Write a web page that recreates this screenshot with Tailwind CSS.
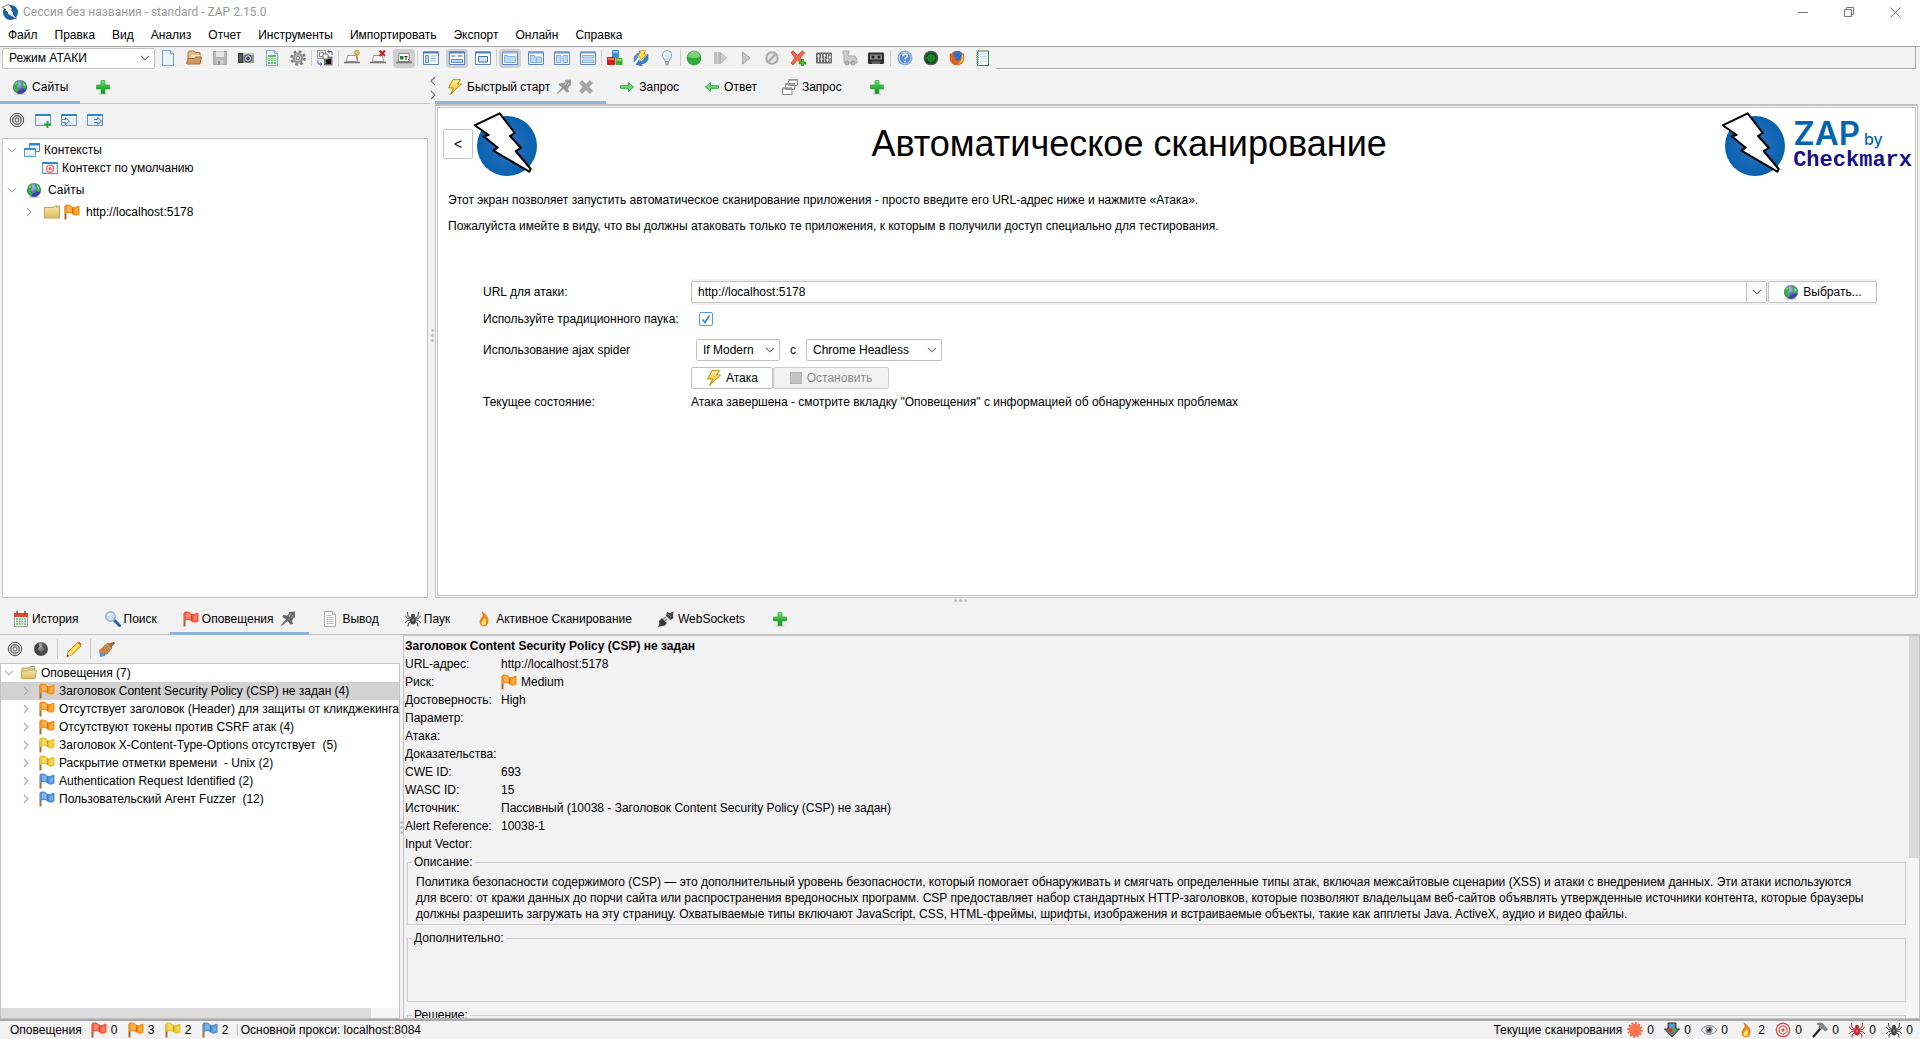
<!DOCTYPE html>
<html lang="ru">
<head>
<meta charset="utf-8">
<title>Сессия без названия - standard - ZAP 2.15.0</title>
<script src="https://cdn.jsdelivr.net/npm/@tailwindcss/browser@4"></script>
</head>
<body class="flex h-screen flex-col overflow-hidden bg-[#f2f2f2] font-['Liberation_Sans',Arial,sans-serif] text-xs leading-[18px] text-black">

<svg width="0" height="0" class="absolute" aria-hidden="true">
  <defs>
    <radialGradient id="gBlue"><stop offset="0" stop-color="#2f70c4"/><stop offset="1" stop-color="#0862ae"/></radialGradient>
    <linearGradient id="gBolt" x2="0" y2="1"><stop offset="0" stop-color="#fff3a0"/><stop offset="1" stop-color="#eea800"/></linearGradient>
    <linearGradient id="gGreen" x2="0" y2="1"><stop offset="0" stop-color="#7ee37a"/><stop offset=".5" stop-color="#35b53a"/><stop offset="1" stop-color="#129222"/></linearGradient>
    <linearGradient id="gFolder" x2="0" y2="1"><stop offset="0" stop-color="#fbe7a8"/><stop offset="1" stop-color="#e0bb62"/></linearGradient>
    <linearGradient id="gWin" x2="0" y2="1"><stop offset="0" stop-color="#ffffff"/><stop offset="1" stop-color="#dbe8f6"/></linearGradient>
    <radialGradient id="gGlobe" cx=".4" cy=".3"><stop offset="0" stop-color="#c0c6ff"/><stop offset="1" stop-color="#3c40a8"/></radialGradient>
    <radialGradient id="gGray" cx=".4" cy=".3"><stop offset="0" stop-color="#b5b5b5"/><stop offset="1" stop-color="#4a4a4a"/></radialGradient>

    <symbol id="zap" viewBox="0 0 64 64"><circle cx="34" cy="34" r="30" fill="url(#gBlue)"/><path d="M1.7 13.3 26.7 1.3 41.7 21 37 24 48 36 42.7 39 57.7 57 56.3 59.7 20.3 38.7 24.7 35.7 10.7 24.3 15.7 23Z" fill="#fff" stroke="#000" stroke-width="2" stroke-linejoin="round"/></symbol>
    <symbol id="globe" viewBox="0 0 16 16"><ellipse cx="8" cy="15" rx="6" ry="1" fill="#ccc"/><circle cx="8" cy="8" r="7" fill="url(#gGlobe)"/><path d="M2 5C3 3 4 2 6 1.500L5.500 4 7 5.500 5 7 5 9 7 10 6.500 12 5 14C2 12 1 9 2 5ZM10 1.500C13 3 15 6 14.800 9L12 10 10 8 11 6 9 4Z" fill="#2fb33c"/><path d="M3 5 5 3 4.500 6ZM11 3 13.500 6 12 8Z" fill="#8cef84"/></symbol>
    <symbol id="globeGray" viewBox="0 0 16 16"><circle cx="8" cy="8" r="7" fill="url(#gGray)"/><path d="M2 5C3 3 4 2 6 1.500L5.500 4 7 5.500 5 7 5 9 7 10 6.500 12 5 14C2 12 1 9 2 5Z" fill="#444"/><path d="M10 2 14 6 12 9 9 5Z" fill="#555"/></symbol>
    <symbol id="plus" viewBox="0 0 16 16"><ellipse cx="8" cy="15" rx="5" ry=".8" fill="#ccc"/><path d="M6 1.500h4V6h4.500v4H10v4.500H6V10H1.500V6H6Z" fill="url(#gGreen)" stroke="#1c9a2a" stroke-width=".6"/></symbol>
    <symbol id="bolt" viewBox="0 0 16 16"><path d="M6 .6 13.500.6 10.500 5 14.500 5 3.500 15.500 6.500 9 1.600 9Z" fill="url(#gBolt)" stroke="#b8860b" stroke-width=".9" stroke-linejoin="round"/></symbol>
    <symbol id="target" viewBox="0 0 16 16"><circle cx="8" cy="8" r="6.700" fill="#d8d8d8" stroke="#555" stroke-width="1"/><circle cx="8" cy="8" r="4.300" fill="none" stroke="#777" stroke-width="1.400"/><circle cx="8" cy="8" r="1.800" fill="#eee" stroke="#777" stroke-width="1.200"/></symbol>
    <symbol id="targetRed" viewBox="0 0 16 16"><circle cx="8" cy="8" r="6.700" fill="#fff" stroke="#d9534f" stroke-width="1.400"/><circle cx="8" cy="8" r="4" fill="none" stroke="#e36464" stroke-width="1.500"/><circle cx="8" cy="8" r="1.700" fill="#d9534f"/></symbol>
    <symbol id="win" viewBox="0 0 16 16"><path d="M.5 2.500h15v11H.5Z" fill="url(#gWin)" stroke="#5a96cc"/><path d="M.5 2h15v2H.5Z" fill="#2e86d0"/></symbol>
    <symbol id="winAdd" viewBox="0 0 16 16"><use href="#win"/><path d="M11.500 9h2v2.500H16v2h-2.500V16h-2v-2.500H9v-2h2.500Z" fill="#25a833"/></symbol>
    <symbol id="winIn" viewBox="0 0 16 16"><use href="#win"/><path d="M1 7.500h3.500V5.500L8.500 9 4.500 12.500v-2H1" fill="#e6f2ff" stroke="#3b7fc0" stroke-width="1"/></symbol>
    <symbol id="winOut" viewBox="0 0 16 16"><use href="#win"/><path d="M7 7.500h3.500V5.500L14.500 9l-4 3.500v-2H7" fill="#e6f2ff" stroke="#3b7fc0" stroke-width="1"/></symbol>
    <symbol id="contexts" viewBox="0 0 16 16"><path d="M5.500 1.500h10v8h-10Z" fill="url(#gWin)" stroke="#4c8fd0"/><path d="M5 1h11v2.500H5Z" fill="#2e86d0"/><path d="M.5 6.500h11v8H.5Z" fill="url(#gWin)" stroke="#5a96cc"/><path d="M.5 6h11v2H.5Z" fill="#3b8fd6"/></symbol>
    <symbol id="context" viewBox="0 0 16 16"><use href="#win"/><circle cx="8" cy="8.700" r="3.500" fill="#ffe3e0" stroke="#ee6b6b" stroke-width="1.200"/><circle cx="8" cy="8.700" r="1.400" fill="#ee5b5b"/></symbol>
    <symbol id="folder" viewBox="0 0 16 16"><path d="M.5 3.500h9l1-1.500h5v12H.5Z" fill="url(#gFolder)" stroke="#c9a14d"/><path d="M12 3h2.500" stroke="#6fb7c9"/></symbol>
    <symbol id="folderOpen" viewBox="0 0 16 16"><path d="M1 13.500V3h7l1-1.500h4.500V13Z" fill="#f6dc92" stroke="#b99a4e"/><path d="M8 2.500h5v3H8Z" fill="#a5d3e6"/><path d="M.5 13.500V6h5l1-1h9l-1.500 8.500Z" fill="url(#gFolder)" stroke="#c9a14d"/></symbol>
    <symbol id="flag" viewBox="0 0 16 16"><path d="M1.500 2v13.500" stroke="#a06a35" stroke-width="2"/><path d="M1 1C4 .2 6 .4 8 2.500 10 3.400 12 3.200 13.500 1.800L15.500 2V10.500C13 12.200 10 12 8 10 6 8.600 4 9 1 10Z" fill="currentColor"/><path d="M3 2.500C5 1.800 6 2.200 7.500 3.500V8C6 7.200 5 7.300 3 7.800Z" fill="#fff" opacity=".3"/><path d="M8.700 3.500V10" stroke="#000" opacity=".22"/><path d="M10.500 5C12 5 13 4.600 14 4V8.500C13 9.500 12 9.800 10.500 9.700Z" fill="#fff" opacity=".22"/></symbol>
    <symbol id="chevD" viewBox="0 0 10 6"><path d="M1 .8 5 4.800 9 .8" fill="none" stroke="currentColor" stroke-width="1.100"/></symbol>
    <symbol id="chevR" viewBox="0 0 6 10"><path d="M1 1 5 5 1 9" fill="none" stroke="currentColor" stroke-width="1.100"/></symbol>
    <symbol id="file" viewBox="0 0 16 16"><path d="M2.500.5h8l3 3v12h-11Z" fill="#edf5fd" stroke="#6fa3d8"/><path d="M10.500.5v3h3" fill="#fff" stroke="#6fa3d8"/></symbol>
    <symbol id="open" viewBox="0 0 16 16"><path d="M2 9V2.500C2 1 3 1 4 1h4l1 1.500h5V9Z" fill="#e6b98c" stroke="#a87848"/><path d="M5 5h9v6H5Z" fill="#f7e3cc"/><path d="M.5 13.500 2 8.500h6L9.500 7H15.500l-1.500 7H1Z" fill="#d49a62" stroke="#a06c3c"/></symbol>
    <symbol id="save" viewBox="0 0 16 16"><path d="M1.500 1.500h13v13h-13Z" fill="#b9b9b9" stroke="#a2a2a2"/><path d="M4 1.500h8V7H4Z" fill="#e6e6e6"/><path d="M4.500 10h7v4.500h-7Z" fill="#cfcfcf"/><path d="M6 11h2v3.500H6Z" fill="#8d8d8d"/></symbol>
    <symbol id="camera" viewBox="0 0 16 16"><path d="M0 3h16v10H0Z" fill="#9a9a9a"/><path d="M0 3h5v10H0Z" fill="#3e3e3e"/><path d="M1 6h3M1 8h3M1 10h3" stroke="#777"/><path d="M5 3h11v2H5Z" fill="#c4c4c4"/><circle cx="10" cy="8.500" r="3.700" fill="#cfd3de" stroke="#444"/><circle cx="10" cy="8.500" r="2" fill="#454b70"/></symbol>
    <symbol id="sheet" viewBox="0 0 16 16"><path d="M2.500.5h8l3 3v12h-11Z" fill="#edf5fd" stroke="#6fa3d8"/><path d="M10.500.5v3h3" fill="#fff" stroke="#6fa3d8"/><path d="M4 5h8v9H4Z" fill="#5cb85c"/><path d="M4 7.500h8M4 9.500h8M4 11.500h8M6.500 7v7M9.500 7v7" stroke="#e8ffe8"/></symbol>
    <symbol id="gear" viewBox="0 0 16 16"><circle cx="8" cy="8" r="6.500" fill="none" stroke="#777" stroke-width="2.600" stroke-dasharray="2.550"/><circle cx="8" cy="8" r="4.300" fill="#c9c9c9" stroke="#999" stroke-width="2.400"/><circle cx="8" cy="8" r="1.800" fill="#f2f2f2" stroke="#777"/></symbol>
    <symbol id="swap" viewBox="0 0 16 16"><path d="M.5.500h8v8h-8Z" fill="#eee" stroke="#999"/><path d="M2.500 2.500h4v4h-4Z" fill="#fff" stroke="#888"/><path d="M7 6.500h8.500v9H7Z" fill="#777"/><path d="M9 9h5v5H9Z" fill="#111"/><path d="M6 4h5v5H6Z" fill="#fff" stroke="#777"/><path d="M15 5V1.500h-4M12.500 0l-2 1.500 2 1.500M1 10.500V14h3.500M3 12.500 5 14l-2 1.500" fill="none" stroke="#3d63c8"/></symbol>
    <symbol id="tray" viewBox="0 0 16 16"><path d="M3.500 5.500h9l1 6h-11Z" fill="#f7f7f7" stroke="#9a9a9a"/><path d="M0 12.500h16" stroke="#777" stroke-width="1.600"/></symbol>
    <symbol id="trayPin" viewBox="0 0 16 16"><use href="#tray"/><circle cx="13" cy="2.500" r="2.300" fill="#e9c95c" stroke="#a8852b" stroke-width=".7"/><path d="M13 5v5" stroke="#b3902f" stroke-width="1.600"/></symbol>
    <symbol id="trayX" viewBox="0 0 16 16"><use href="#tray"/><path d="m9.500.5 5.500 5.500m0-5.500L9.500 6" stroke="#c1272d" stroke-width="2.200"/></symbol>
    <symbol id="trayOn" viewBox="0 0 16 16"><path d="M3 3.500h10l.5 8h-11Z" fill="#fff" stroke="#888"/><path d="M0 12.500h16" stroke="#777" stroke-width="1.600"/><path d="M4 6h3.500v3.500H4Z" fill="#178a2a"/><path d="M8.500 6.500h3M10 6.500V10M12 9.500h1" stroke="#222"/></symbol>
    <symbol id="layA" viewBox="0 0 16 16"><path d="M.5 2h15v12.500H.5Z" fill="#fff" stroke="#5b84bd"/><path d="M.5 1.500h15v2H.5Z" fill="#4f7dbd"/><path d="M2.500 5.500h3v7h-3Z" fill="#bcd8f6" stroke="#5f8fcb"/><path d="M7.500 6h6M7.500 8.500h6M7.500 11h6" stroke="#8db4e0"/></symbol>
    <symbol id="layB" viewBox="0 0 16 16"><path d="M.5 2h15v12.500H.5Z" fill="#fff" stroke="#5b84bd"/><path d="M.5 1.500h15v2H.5Z" fill="#4f7dbd"/><path d="M2.500 9.500h11v3h-11Z" fill="#bcd8f6" stroke="#5f8fcb"/><path d="M2.500 6h4M8.500 6h5" stroke="#6f9dd2" stroke-width="1.400"/></symbol>
    <symbol id="layC" viewBox="0 0 16 16"><path d="M.5 2h15v12.500H.5Z" fill="#fff" stroke="#5b84bd"/><path d="M.5 1.500h15v2H.5Z" fill="#4f7dbd"/><path d="M3.500 6.500h9v5.500h-9Z" fill="#cfe2f8" stroke="#3f6eae"/></symbol>
    <symbol id="layD" viewBox="0 0 16 16"><path d="M.5 2h15v12.500H.5Z" fill="#fff" stroke="#5b84bd"/><path d="M.5 1.500h15v2H.5Z" fill="#8fb2de"/><path d="M2.500 6.500V5.500h3v1h8V12.500h-11Z" fill="#bcd8f6" stroke="#85b1e4"/></symbol>
    <symbol id="layE" viewBox="0 0 16 16"><path d="M.5 2h15v12.500H.5Z" fill="#fff" stroke="#5b84bd"/><path d="M.5 1.500h15v2H.5Z" fill="#6f9bd3"/><path d="M2.500 7.500V5.500h4v1.500h7v5.500h-11Z" fill="#bcd8f6" stroke="#85b1e4"/><path d="M8.500 8v4" stroke="#85b1e4"/></symbol>
    <symbol id="layF" viewBox="0 0 16 16"><path d="M.5 2h15v12.500H.5Z" fill="#fff" stroke="#5b84bd"/><path d="M.5 1.500h15v2H.5Z" fill="#6f9bd3"/><path d="M2.500 5.500h4.500v7H2.500ZM9 5.500h4.500v7H9Z" fill="#bcd8f6" stroke="#85b1e4"/></symbol>
    <symbol id="layG" viewBox="0 0 16 16"><path d="M.5 2h15v12.500H.5Z" fill="#fff" stroke="#5b84bd"/><path d="M.5 1.500h15v2H.5Z" fill="#6f9bd3"/><path d="M2.500 5.500h11v2.500h-11ZM2.500 10h11v2.500h-11Z" fill="#cfe2f8" stroke="#85b1e4"/></symbol>
    <symbol id="cubes" viewBox="0 0 16 16"><rect x="5" y="0" width="7" height="8" rx="1" fill="#3c8fd8"/><path d="M6 1h5v2H6Z" fill="#8cc4f0"/><rect x="0" y="7" width="8" height="8" rx="1" fill="#c9201f"/><path d="M1 8h6v2H1Z" fill="#ec6b63"/><rect x="8.500" y="8" width="7" height="7" rx="1" fill="#3fa82f"/><path d="M9.500 9h5v2h-5Z" fill="#8ad67c"/></symbol>
    <symbol id="update" viewBox="0 0 16 16"><path d="M15 4v5c-1 3-4 5-7 5l1.500 2L3 14.500 6 10l1 1.500c2 0 4-1 4.500-3.500Z" fill="#2f7fd0" stroke="#1f5fa8" stroke-width=".5"/><path d="M1 12V8c1-3 3-5 6-5L6 1l6 2-3 4-1-1.500c-2 0-3 1-4 3Z" fill="#4b98e0" stroke="#1f5fa8" stroke-width=".5"/><path d="M8 .5h5L10.500 4.500h3L6 12l1.500-5H4.500Z" fill="#f8dc55" stroke="#b8860b" stroke-width=".5"/></symbol>
    <symbol id="bulb" viewBox="0 0 16 16"><path d="M8 .5a4.700 4.700 0 0 1 3 8.300L9.800 11.500H6.200L5 8.800A4.700 4.700 0 0 1 8 .5Z" fill="#eff8ff" stroke="#6da6d8"/><path d="M7 5v5M9 5v5" stroke="#9cc7ea" stroke-width=".7"/><path d="M6 12h4v2.500L8 16l-2-1.500Z" fill="#aaa"/></symbol>
    <symbol id="dotGreen" viewBox="0 0 16 16"><circle cx="8" cy="8" r="7" fill="#2faa3c" stroke="#238a30" stroke-width=".6"/><path d="M2 7A6 6 0 0 1 14 7Q8 9 2 7Z" fill="#8fe08a" opacity=".75"/></symbol>
    <symbol id="step" viewBox="0 0 16 16"><path d="M2.500 2.500h2v11h-2ZM6 2.500h1.500v11H6ZM8.500 2.500 14.500 8l-6 5.500Z" fill="#ccc" stroke="#aaa" stroke-width=".8"/></symbol>
    <symbol id="play" viewBox="0 0 16 16"><path d="M4.500 2 12 8l-7.500 6Z" fill="#c6c6c6" stroke="#a6a6a6"/></symbol>
    <symbol id="ban" viewBox="0 0 16 16"><circle cx="8" cy="8" r="5.800" fill="#e4e4e4" stroke="#a8a8a8" stroke-width="2"/><path d="m4 12 8-8" stroke="#a8a8a8" stroke-width="2"/></symbol>
    <symbol id="redX" viewBox="0 0 16 16"><path d="M1 2.500 3 .8l4.500 4.700L12.500.8 14.500 3 10 8l4 4.500-2 1.500-4.500-4-4.500 5-2-2L5 8Z" fill="#f4694c" stroke="#c33a20" stroke-width=".7"/><path d="M11.500 9.500h2v2.500H16v2h-2.500v2h-2v-2H9v-2h2.500Z" fill="#3ecb2e" stroke="#157a14" stroke-width=".6"/></symbol>
    <symbol id="mixer" viewBox="0 0 16 16"><rect y="2.500" width="16" height="11" rx="1" fill="#6d6d6d"/><path d="M2.500 4v8M5.500 4v8M8.500 4v8M11.500 4v8M14 4v8" stroke="#ddd"/><path d="M1.500 6h2M4.500 9h2M7.500 5.500h2M10.500 10h2M13 7h2" stroke="#fff" stroke-width="1.400"/></symbol>
    <symbol id="loco" viewBox="0 0 16 16"><path d="M1 1h6v2H6v3h7l2 3v4H2V4H1Z" fill="#cdcdcd" stroke="#a9a9a9"/><circle cx="5" cy="13" r="2" fill="#bbb" stroke="#999"/><circle cx="11" cy="13" r="2" fill="#bbb" stroke="#999"/></symbol>
    <symbol id="tape" viewBox="0 0 16 16"><rect y="2.500" width="16" height="11.500" rx="1" fill="#2f2f2f"/><path d="M2 4.500h12v5H2Z" fill="#888"/><circle cx="5" cy="7" r="1.500" fill="#222"/><circle cx="11" cy="7" r="1.500" fill="#222"/><path d="M4 11.500h8V14H4Z" fill="#666"/></symbol>
    <symbol id="help" viewBox="0 0 16 16"><circle cx="8" cy="8" r="7" fill="#5a8fd0" stroke="#8faed4"/><circle cx="8" cy="8" r="5.800" fill="none" stroke="#dbe8f8" stroke-width=".7"/><path d="M5.800 6.200c0-3 4.500-3 4.500-.2 0 1.600-2.200 1.700-2.200 3.300M8.100 10.800v1.500" fill="none" stroke="#fff" stroke-width="1.500"/></symbol>
    <symbol id="radar" viewBox="0 0 16 16"><circle cx="8" cy="8" r="7.300" fill="#555"/><circle cx="8" cy="8" r="6" fill="#0c4a18"/><circle cx="8" cy="8" r="3.500" fill="#0f7a24" stroke="#31b04a" stroke-width=".6"/><path d="M8 2v12M2 8h12" stroke="#2aa040" stroke-width=".6"/></symbol>
    <symbol id="firefox" viewBox="0 0 16 16"><circle cx="8" cy="8" r="7.300" fill="#e8761f"/><circle cx="8.500" cy="6" r="5" fill="#3a6cc0"/><path d="M1 3c1 2 2 1 4 2-1 2 1 2 2 3-2 1-1 3 2 3 3 0 4-2 4-4l1.500-4c2 5 0 11-6 12C3 15.500-.5 10 1 3Z" fill="#e2601b"/><path d="M13 4c3 4 1 9-4 10 4-3 3-6 4-10Z" fill="#fbc83a"/></symbol>
    <symbol id="note" viewBox="0 0 16 16"><path d="M2.500 1h11v14.500h-11Z" fill="#f6fbff" stroke="#2f8a3c"/><path d="M5 4h7M5 6.500h7M5 9h7M5 11.500h7" stroke="#c3d8ea"/><path d="M2.500 1v14.500" stroke="#999" stroke-width="2.500" stroke-dasharray="1 1"/></symbol>
    <symbol id="pin" viewBox="0 0 16 16"><path d="M9 1 15 .5V6.500L13.500 7 12 10l1 3-2.500.5L7.500 10 1.500 15 .8 14.200 6 8.500 2.500 6 3 4l4 .5 2.500-1.500Z" fill="currentColor"/><path d="M10.500 3 9 6M13 4l-2 3" stroke="#fff" opacity=".5"/></symbol>
    <symbol id="close" viewBox="0 0 16 16"><path d="M1.500 4 4 1.500 8 5.200 12 1.500 14.500 4 10.800 8l3.700 4L12 14.500 8 10.800 4 14.500 1.500 12 5.200 8Z" fill="#a8a8a8" stroke="#969696" stroke-width=".6"/></symbol>
    <symbol id="arrR" viewBox="0 0 16 16"><path d="M1.500 6.700h8v-3L14.500 8l-5 4.300v-3h-8Z" fill="#6fdc7c" stroke="#24a53c" stroke-width=".9"/></symbol>
    <symbol id="arrL" viewBox="0 0 16 16"><path d="M14.500 6.700h-8v-3L1.500 8l5 4.300v-3h8Z" fill="#6fdc7c" stroke="#24a53c" stroke-width=".9"/></symbol>
    <symbol id="stack" viewBox="0 0 16 16"><path d="M6.500.5h9v6h-9ZM3.500 4.500h9v6h-9ZM.5 9h9.500v6.500H.5Z" fill="#fff" stroke="#8a8a8a"/><path d="M6.500 1h9M3.500 5h9M.5 9.500H10" stroke="#999" stroke-width="1.500"/></symbol>
    <symbol id="calendar" viewBox="0 0 16 16"><path d="M1.500 2.500h13v13h-13Z" fill="#fff" stroke="#999"/><path d="M1 2h14v4H1Z" fill="#e04a35"/><path d="M4 0v3.500M12 0v3.500" stroke="#a33" stroke-width="1.400"/><path d="M3 8h10M3 10.500h10M3 13h10" stroke="#58b55a" stroke-width="1.600" stroke-dasharray="2 .7"/></symbol>
    <symbol id="search" viewBox="0 0 16 16"><path d="m8.500 8.500 6 6" stroke="#2a63a8" stroke-width="3" stroke-linecap="round"/><circle cx="5.500" cy="5.500" r="4.700" fill="#c4e0fa" stroke="#9cb0c4" stroke-width="1.400"/><path d="M3 5a3 3 0 0 1 4-2" stroke="#fff" stroke-width="1.300" fill="none"/></symbol>
    <symbol id="page" viewBox="0 0 16 16"><path d="M2.500.5h8l3 3v12h-11Z" fill="#fff" stroke="#a8a8a8"/><path d="M10.500.5v3h3" fill="#ddd" stroke="#a8a8a8"/><path d="M4.500 4.500h5M4.500 6.500h7M4.500 8.500h7M4.500 10.500h7M4.500 12.500h7" stroke="#c0c0c0"/></symbol>
    <symbol id="spider" viewBox="0 0 16 16"><path d="M6 7 3 5.500 2.500 1M10 7l3-1.500L13.500 1M6 8 2.500 7.500 0 4.500M10 8l3.500-.5L16 4.500M6 9 2.500 9.500 0 12M10 9l3.500.5L16 12M6 10.500 3.500 12 3 15.500M10 10.500l2.500 1.500.5 3.500" fill="none" stroke="currentColor" stroke-width="1"/><ellipse cx="8" cy="5" rx="2" ry="2.200" fill="currentColor"/><ellipse cx="8" cy="9.800" rx="2.800" ry="3.800" fill="currentColor"/><ellipse cx="8" cy="9" rx="1" ry="1.800" fill="#fff" opacity=".35"/></symbol>
    <symbol id="fire" viewBox="0 0 16 16"><path d="M6 1C11 4 12 7 12 10c0 3.500-2 5-4 5s-4-1.500-4-4C4 8.500 5.200 8.500 5.700 6.800 7.300 6 7.600 3 6 1Z" fill="#f08a1d" stroke="#dc5b12" stroke-width=".7"/><path d="M8.500 6.500C11 9 10.500 14.300 8 14.300S5 12 6 10.500 8 9 8.500 6.500Z" fill="#ffe263"/></symbol>
    <symbol id="plug" viewBox="0 0 16 16"><path d="M9 1 12 2 15.500.5 15 4l.5 3-3 2L8 5Z" fill="#444"/><path d="M1 10 4 7l5 5-2 2.500-3 .5L0 16l1.500-3Z" fill="#3a3a3a"/><path d="m7 10 2-2M5.500 8l2-2" stroke="#888" stroke-width="1.400"/><path d="m10 3 3 3" stroke="#888"/></symbol>
    <symbol id="pencil" viewBox="0 0 16 16"><path d="M1 15.500 2.500 10.500 11.500 1.500 15 5 5.500 14Z" fill="#ffd733" stroke="#b8780a" stroke-width=".8"/><path d="M11.500 1.500 13 .5 15.500 3 15 5Z" fill="#e8584a"/><path d="M1 15.500 2.500 10.500 5.500 14Z" fill="#f4d9b0"/><path d="M.8 15.700 1.500 13.500 3 14.800Z" fill="#333"/><path d="m4 12.500 9-9" stroke="#fff2a8"/></symbol>
    <symbol id="broom" viewBox="0 0 16 16"><path d="M0 9h5l2 3-1 3-5 1Z" fill="#5b95dc"/><path d="M0 9 4 6l3 5-3 2Z" fill="#f0793a"/><path d="m4 6 5-4 4 5-5 6H6Z" fill="#c99b5c" stroke="#8d6535" stroke-width=".7"/><path d="M9 3 15.500.5 16 2.500 12 6.500Z" fill="#9a6a35"/><path d="m6 6 3 5M7.500 5l3 4" stroke="#8d6535" stroke-width=".7"/></symbol>
    <symbol id="burst" viewBox="0 0 16 16"><circle cx="8" cy="8" r="6.300" fill="#ff7452"/><circle cx="8" cy="8" r="6.900" fill="none" stroke="#e85f3f" stroke-width="1.600" stroke-dasharray="1.800"/></symbol>
    <symbol id="down" viewBox="0 0 16 16"><path d="M4 1h8v6h3.500L8 15 .5 7H4Z" fill="#777" stroke="#333"/><path d="M5.500 2h5v4h-5Z" fill="#4aa3df"/><path d="M4.500 6.500H8V10H4.500Z" fill="#d7352c"/><path d="M8.500 6.500H12V10H8.500Z" fill="#43b04a"/></symbol>
    <symbol id="eye" viewBox="0 0 16 16"><path d="M.5 8C3 4 6 3.500 8 3.500S13 4 15.500 8C13 12 10 12.200 8 12.200S3 12 .5 8Z" fill="#f2f2f2" stroke="#777"/><circle cx="8" cy="7.800" r="3.600" fill="#8c8f96"/><circle cx="8" cy="7.800" r="1.900" fill="#222"/><circle cx="7" cy="6.800" r=".8" fill="#fff"/></symbol>
    <symbol id="hammer" viewBox="0 0 16 16"><path d="m1 15 8-9" stroke="#222" stroke-width="2.200"/><path d="M5 2C7 .5 9.500.5 11 2l4.500 5.500-2 1.500L10 6 8 7.500 7 5.500 8 3.500Z" fill="#888" stroke="#555" stroke-width=".6"/></symbol>
  </defs>
</svg>

<header class="shrink-0 bg-white">
  <div class="flex h-6 items-center pl-[2px]">
    <svg class="size-4"><use href="#zap"/></svg>
    <h1 class="ml-[5px] font-['Roboto','Open_Sans',sans-serif] text-xs text-[#999]">Сессия без названия - standard - ZAP 2.15.0</h1>
    <div class="ml-auto flex pr-[2px] text-[#777]">
      <button class="flex h-5 w-[46px] items-center justify-center" aria-label="Свернуть"><svg width="11" height="11" viewBox="0 0 11 11"><path d="M0 5.500h10" stroke="currentColor"/></svg></button>
      <button class="flex h-5 w-[46px] items-center justify-center" aria-label="Развернуть"><svg width="11" height="11" viewBox="0 0 11 11"><path d="M.5 2.500h7v7h-7ZM2.500 2.500v-2h7v7h-2" fill="none" stroke="currentColor"/></svg></button>
      <button class="flex h-5 w-[46px] items-center justify-center" aria-label="Закрыть"><svg width="11" height="11" viewBox="0 0 11 11"><path d="m.5.5 10 10m0-10-10 10" stroke="currentColor"/></svg></button>
    </div>
  </div>
  <nav class="flex h-[22px] items-center gap-px">
    <button class="px-2">Файл</button><button class="px-2">Правка</button><button class="px-2">Вид</button><button class="px-2">Анализ</button><button class="px-2">Отчет</button><button class="px-2">Инструменты</button><button class="px-2">Импортировать</button><button class="px-2">Экспорт</button><button class="px-2">Онлайн</button><button class="px-2">Справка</button>
  </nav>
</header>

<div class="flex h-6 shrink-0 items-center border-t border-b border-t-[#a8a8a8] border-b-white pl-[2px]" role="toolbar">
  <div class="grid w-[153px] items-center">
    <select aria-label="Режим" class="h-[21px] appearance-none rounded-xs border border-[#c2c2c2] bg-white pl-[6px] [grid-area:1/1]"><option>Режим АТАКИ</option></select>
    <svg class="pointer-events-none mr-[5px] h-[6px] w-[10px] justify-self-end text-[#666] [grid-area:1/1]"><use href="#chevD"/></svg>
  </div>
  <button class="mx-px flex h-[19px] w-6 items-center justify-center rounded-xs"><svg class="size-4"><use href="#file"/></svg></button>
  <button class="mx-px flex h-[19px] w-6 items-center justify-center rounded-xs"><svg class="size-4"><use href="#open"/></svg></button>
  <button class="mx-px flex h-[19px] w-6 items-center justify-center rounded-xs"><svg class="size-4"><use href="#save"/></svg></button>
  <button class="mx-px flex h-[19px] w-6 items-center justify-center rounded-xs"><svg class="size-4"><use href="#camera"/></svg></button>
  <button class="mx-px flex h-[19px] w-6 items-center justify-center rounded-xs"><svg class="size-4"><use href="#sheet"/></svg></button>
  <button class="mx-px flex h-[19px] w-6 items-center justify-center rounded-xs"><svg class="size-4"><use href="#gear"/></svg></button>
  <i class="h-4 w-px bg-[#ccc]"></i>
  <button class="mx-px flex h-[19px] w-6 items-center justify-center rounded-xs"><svg class="size-4"><use href="#swap"/></svg></button>
  <i class="h-4 w-px bg-[#ccc]"></i>
  <button class="mx-px flex h-[19px] w-6 items-center justify-center rounded-xs"><svg class="size-4"><use href="#trayPin"/></svg></button>
  <button class="mx-px flex h-[19px] w-6 items-center justify-center rounded-xs"><svg class="size-4"><use href="#trayX"/></svg></button>
  <button class="mx-[2px] flex h-[19px] w-[22px] items-center justify-center rounded-sm bg-[#cfcfcf]"><svg class="size-4"><use href="#trayOn"/></svg></button>
  <i class="h-4 w-px bg-[#ccc]"></i>
  <button class="mx-px flex h-[19px] w-6 items-center justify-center rounded-xs"><svg class="size-4"><use href="#layA"/></svg></button>
  <button class="mx-[2px] flex h-[19px] w-[22px] items-center justify-center rounded-sm bg-[#cfcfcf]"><svg class="size-4"><use href="#layB"/></svg></button>
  <button class="mx-px flex h-[19px] w-6 items-center justify-center rounded-xs"><svg class="size-4"><use href="#layC"/></svg></button>
  <i class="h-4 w-px bg-[#ccc]"></i>
  <button class="mx-[2px] flex h-[19px] w-[22px] items-center justify-center rounded-sm bg-[#cfcfcf]"><svg class="size-4"><use href="#layD"/></svg></button>
  <button class="mx-px flex h-[19px] w-6 items-center justify-center rounded-xs"><svg class="size-4"><use href="#layE"/></svg></button>
  <button class="mx-px flex h-[19px] w-6 items-center justify-center rounded-xs"><svg class="size-4"><use href="#layF"/></svg></button>
  <button class="mx-px flex h-[19px] w-6 items-center justify-center rounded-xs"><svg class="size-4"><use href="#layG"/></svg></button>
  <i class="h-4 w-px bg-[#ccc]"></i>
  <button class="mx-px flex h-[19px] w-6 items-center justify-center rounded-xs"><svg class="size-4"><use href="#cubes"/></svg></button>
  <button class="mx-px flex h-[19px] w-6 items-center justify-center rounded-xs"><svg class="size-4"><use href="#update"/></svg></button>
  <button class="mx-px flex h-[19px] w-6 items-center justify-center rounded-xs"><svg class="size-4"><use href="#bulb"/></svg></button>
  <i class="h-4 w-px bg-[#ccc]"></i>
  <button class="mx-px flex h-[19px] w-6 items-center justify-center rounded-xs"><svg class="size-4"><use href="#dotGreen"/></svg></button>
  <button class="mx-px flex h-[19px] w-6 items-center justify-center rounded-xs"><svg class="size-4"><use href="#step"/></svg></button>
  <button class="mx-px flex h-[19px] w-6 items-center justify-center rounded-xs"><svg class="size-4"><use href="#play"/></svg></button>
  <button class="mx-px flex h-[19px] w-6 items-center justify-center rounded-xs"><svg class="size-4"><use href="#ban"/></svg></button>
  <button class="mx-px flex h-[19px] w-6 items-center justify-center rounded-xs"><svg class="size-4"><use href="#redX"/></svg></button>
  <button class="mx-px flex h-[19px] w-6 items-center justify-center rounded-xs"><svg class="size-4"><use href="#mixer"/></svg></button>
  <button class="mx-px flex h-[19px] w-6 items-center justify-center rounded-xs"><svg class="size-4"><use href="#loco"/></svg></button>
  <button class="mx-px flex h-[19px] w-6 items-center justify-center rounded-xs"><svg class="size-4"><use href="#tape"/></svg></button>
  <i class="mx-px h-4 w-px bg-[#ccc]"></i>
  <button class="mx-px flex h-[19px] w-6 items-center justify-center rounded-xs"><svg class="size-4"><use href="#help"/></svg></button>
  <button class="mx-px flex h-[19px] w-6 items-center justify-center rounded-xs"><svg class="size-4"><use href="#radar"/></svg></button>
  <button class="mx-px flex h-[19px] w-6 items-center justify-center rounded-xs"><svg class="size-4"><use href="#firefox"/></svg></button>
  <button class="mx-px flex h-[19px] w-6 items-center justify-center rounded-xs"><svg class="size-4"><use href="#note"/></svg></button>
  <div class="mr-1 h-full flex-1 border-r border-b border-[#a8a8a8]"></div>
</div>

<main class="flex min-h-0 flex-1">
  <section class="flex w-[430px] shrink-0 flex-col">
    <div class="flex h-[34px] shrink-0 gap-px border-b border-[#c2c2c2]">
      <button class="-mb-px flex items-center gap-1 border-b-3 border-[#8fb4dc] pt-[3px] pr-3 pl-3"><svg class="size-4"><use href="#globe"/></svg>Сайты</button>
      <button class="flex items-center px-[14px]" aria-label="Добавить вкладку"><svg class="size-4"><use href="#plus"/></svg></button>
    </div>
    <div class="flex h-[34px] shrink-0 items-center gap-[10px] pb-[2px] pl-[9px]">
      <svg class="size-4"><use href="#target"/></svg><svg class="size-4"><use href="#winAdd"/></svg><svg class="size-4"><use href="#winIn"/></svg><svg class="size-4"><use href="#winOut"/></svg>
    </div>
    <ul class="mr-[2px] ml-[2px] flex-1 border border-[#c2c2c2] bg-white pt-[2px]">
      <li class="flex h-[18px] items-center gap-1 pl-1"><svg class="mr-[3px] h-[6px] w-[10px] text-[#aaa]"><use href="#chevD"/></svg><svg class="size-4"><use href="#contexts"/></svg>Контексты</li>
      <li class="flex h-[18px] items-center gap-1 pl-[39px]"><svg class="size-4"><use href="#context"/></svg>Контекст по умолчанию</li>
      <li class="flex h-[26px] items-center gap-[6px] pl-1"><svg class="mr-[3px] h-[6px] w-[10px] text-[#aaa]"><use href="#chevD"/></svg><svg class="size-4"><use href="#globe"/></svg>Сайты</li>
      <li class="flex h-[18px] items-center gap-1 pl-[23px]"><svg class="mr-2 h-[10px] w-[6px] text-[#aaa]"><use href="#chevR"/></svg><svg class="size-4"><use href="#folder"/></svg><svg class="size-4 text-[#f99416]"><use href="#flag"/></svg><span class="pl-[2px]">http://localhost:5178</span></li>
    </ul>
  </section>
  <div class="flex w-[5px] shrink-0 flex-col items-center text-[#777]">
    <svg class="mt-[6px] h-[10px] w-[6px] shrink-0 rotate-180"><use href="#chevR"/></svg>
    <svg class="mt-1 h-[10px] w-[6px] shrink-0"><use href="#chevR"/></svg>
    <span class="my-auto flex flex-col gap-[2px] pb-7"><i class="size-[3px] rounded-full bg-[#bbb]"></i><i class="size-[3px] rounded-full bg-[#bbb]"></i><i class="size-[3px] rounded-full bg-[#bbb]"></i></span>
  </div>
  <section class="flex min-w-0 flex-1 flex-col pr-[2px]">
    <div class="flex h-[34px] shrink-0 gap-px">
      <button class="flex items-center gap-1 border-b-3 border-[#8fb4dc] pt-[3px] pr-3 pl-3"><svg class="size-4"><use href="#bolt"/></svg>Быстрый старт<svg class="ml-[2px] size-4 text-[#999]"><use href="#pin"/></svg><svg class="ml-[2px] size-4"><use href="#close"/></svg></button>
      <button class="flex items-center gap-1 px-3"><svg class="size-4"><use href="#arrR"/></svg>Запрос</button>
      <button class="flex items-center gap-1 px-3"><svg class="size-4"><use href="#arrL"/></svg>Ответ</button>
      <button class="flex items-center gap-1 px-3"><svg class="size-4"><use href="#stack"/></svg>Запрос</button>
      <button class="flex items-center px-[14px]" aria-label="Добавить вкладку"><svg class="size-4"><use href="#plus"/></svg></button>
    </div>
    <div class="flex min-h-0 flex-1 flex-col border border-t-2 border-[#c2c2c2] bg-white p-px">
      <div class="flex-1 border border-[#c2c2c2] pt-[3px] pl-[5px]">
        <div class="flex h-[66px] items-center">
          <button class="size-[30px] rounded-xs border border-[#c2c2c2] text-sm">&lt;</button>
          <svg class="size-16 shrink-0"><use href="#zap"/></svg>
          <h2 class="flex-1 text-center text-[36px] leading-10">Автоматическое сканирование</h2>
          <div class="flex items-center pr-[3px]">
            <svg class="size-16 shrink-0"><use href="#zap"/></svg>
            <div class="flex flex-col pt-1 pl-2">
              <div class="flex items-baseline gap-1 font-['Inter',sans-serif] leading-6 font-semibold text-[#0465ae]"><span class="text-[33px]">ZAP</span><span class="text-base font-medium">by</span></div>
              <div class="font-['Liberation_Mono',monospace] text-[22px] leading-5 font-bold text-[#160f86]">Checkmarx</div>
            </div>
          </div>
        </div>
        <p class="mt-[14px] px-[5px]">Этот экран позволяет запустить автоматическое сканирование приложения - просто введите его URL-адрес ниже и нажмите «Атака».</p>
        <p class="mt-2 px-[5px]">Пожалуйста имейте в виду, что вы должны атаковать только те приложения, к которым в получили доступ специально для тестирования.</p>
        <form class="mt-[44px] grid grid-cols-[208px_1fr] items-center pr-[38px] pl-10" onsubmit="return false">
          <label for="url" class="h-[26px] leading-[26px]">URL для атаки:</label>
          <div class="flex gap-px bg-[#f2f2f2] py-[2px]">
            <div class="flex h-[22px] flex-1 rounded-xs border border-[#c2c2c2] bg-white">
              <input id="url" type="text" value="http://localhost:5178" class="min-w-0 flex-1 px-[6px]">
              <button aria-label="Список адресов" class="flex w-5 items-center justify-center border-l border-[#c2c2c2] bg-[#fafafa]"><svg class="h-[6px] w-[10px] text-[#666]"><use href="#chevD"/></svg></button>
            </div>
            <button class="flex h-[22px] w-[109px] items-center justify-center gap-1 rounded-xs border border-[#c2c2c2] bg-white"><svg class="size-4"><use href="#globe"/></svg>Выбрать...</button>
          </div>
          <label for="spider-on" class="h-7 leading-7">Используйте традиционного паука:</label>
          <div class="grid h-7 items-center pl-2">
            <input id="spider-on" type="checkbox" checked class="size-[14px] appearance-none rounded-xs border border-[#4a9be8] bg-white [grid-area:1/1]">
            <svg class="pointer-events-none size-[14px] [grid-area:1/1]" viewBox="0 0 14 14"><path d="m3.500 7.500 2.500 3 4.500-7" fill="none" stroke="#3f8fe0" stroke-width="1.800"/></svg>
          </div>
          <label for="ajax" class="h-[34px] leading-[34px]">Использование ajax spider</label>
          <div class="flex h-[34px] items-center pl-[5px]">
            <div class="grid w-[84px] items-center">
              <select id="ajax" class="h-[22px] appearance-none rounded-xs border border-[#c2c2c2] bg-white pl-[6px] [grid-area:1/1]"><option>If Modern</option></select>
              <svg class="pointer-events-none mr-[5px] h-[6px] w-[10px] justify-self-end text-[#666] [grid-area:1/1]"><use href="#chevD"/></svg>
            </div>
            <label for="browser" class="px-[10px]">с</label>
            <div class="grid w-[136px] items-center">
              <select id="browser" class="h-[22px] appearance-none rounded-xs border border-[#c2c2c2] bg-white pl-[6px] [grid-area:1/1]"><option>Chrome Headless</option></select>
              <svg class="pointer-events-none mr-[5px] h-[6px] w-[10px] justify-self-end text-[#666] [grid-area:1/1]"><use href="#chevD"/></svg>
            </div>
          </div>
          <div class="col-start-2 flex">
            <button class="flex h-[22px] w-[82px] items-center justify-center gap-1 rounded-xs border border-[#c2c2c2]"><svg class="size-4"><use href="#bolt"/></svg>Атака</button>
            <button disabled class="flex h-[22px] w-[116px] items-center justify-center gap-[5px] rounded-xs border border-[#cdcdcd] bg-[#f2f2f2] text-[#8c8c8c]"><i class="size-3 border border-[#b0b0b0] bg-[#c4c4c4]"></i>Остановить</button>
          </div>
          <span class="leading-[26px]">Текущее состояние:</span>
          <output class="leading-[26px]">Атака завершена - смотрите вкладку "Оповещения" с информацией об обнаруженных проблемах</output>
        </form>
      </div>
    </div>
  </section>
</main>

<div class="flex h-[5px] shrink-0 items-center justify-center gap-[2px]"><i class="size-[3px] rounded-full bg-[#bbb]"></i><i class="size-[3px] rounded-full bg-[#bbb]"></i><i class="size-[3px] rounded-full bg-[#bbb]"></i></div>

<section class="flex h-[40vh] shrink-0 flex-col">
  <div class="flex h-8 shrink-0 border-b border-[#c2c2c2]">
    <button class="flex items-center gap-[3px] px-[13px]"><svg class="size-4"><use href="#calendar"/></svg>История</button>
    <button class="flex items-center gap-[3px] px-[13px]"><svg class="size-4"><use href="#search"/></svg>Поиск</button>
    <button class="-mb-px flex items-center gap-[3px] border-b-3 border-[#8fb4dc] px-[13px] pt-[2px]"><svg class="size-4 text-[#f65a3c]"><use href="#flag"/></svg>Оповещения<svg class="ml-1 size-4 text-[#666]"><use href="#pin"/></svg></button>
    <button class="flex items-center gap-1 px-[13px]"><svg class="size-4"><use href="#page"/></svg>Вывод</button>
    <button class="flex items-center gap-[3px] px-[13px]"><svg class="size-4 text-[#444]"><use href="#spider"/></svg>Паук</button>
    <button class="flex items-center gap-1 px-[13px]"><svg class="size-4"><use href="#fire"/></svg>Активное Сканирование</button>
    <button class="flex items-center gap-1 px-[13px]"><svg class="size-4"><use href="#plug"/></svg>WebSockets</button>
    <button class="flex items-center px-[14px]" aria-label="Добавить вкладку"><svg class="size-4"><use href="#plus"/></svg></button>
  </div>
  <div class="flex min-h-0 flex-1">
    <div class="flex w-[400px] shrink-0 flex-col">
      <div class="flex h-7 shrink-0 items-center pl-[7px]">
        <svg class="size-4"><use href="#target"/></svg><svg class="ml-[10px] size-4"><use href="#globeGray"/></svg>
        <i class="mx-2 h-5 w-px bg-[#c8c8c8]"></i><svg class="size-4"><use href="#pencil"/></svg>
        <i class="mx-2 h-5 w-px bg-[#c8c8c8]"></i><svg class="size-4"><use href="#broom"/></svg>
      </div>
      <div class="flex min-h-0 flex-1 flex-col border border-[#c2c2c2] bg-white">
        <ul class="min-h-0 flex-1 overflow-hidden">
          <li class="flex h-[18px] items-center gap-1 pl-[3px]"><svg class="mr-[3px] h-[6px] w-[10px] text-[#aaa]"><use href="#chevD"/></svg><svg class="size-4"><use href="#folderOpen"/></svg>Оповещения (7)</li>
          <li class="flex h-[18px] items-center gap-1 bg-[#d2d2d2] pl-[22px] whitespace-pre"><svg class="mr-[6px] h-[10px] w-[6px] shrink-0 text-[#aaa]"><use href="#chevR"/></svg><svg class="size-4 shrink-0 text-[#f99416]"><use href="#flag"/></svg>Заголовок Content Security Policy (CSP) не задан (4)</li>
          <li class="flex h-[18px] items-center gap-1 pl-[22px] whitespace-pre"><svg class="mr-[6px] h-[10px] w-[6px] shrink-0 text-[#aaa]"><use href="#chevR"/></svg><svg class="size-4 shrink-0 text-[#f99416]"><use href="#flag"/></svg>Отсутствует заголовок (Header) для защиты от кликджекинга</li>
          <li class="flex h-[18px] items-center gap-1 pl-[22px] whitespace-pre"><svg class="mr-[6px] h-[10px] w-[6px] shrink-0 text-[#aaa]"><use href="#chevR"/></svg><svg class="size-4 shrink-0 text-[#f99416]"><use href="#flag"/></svg>Отсутствуют токены против CSRF атак (4)</li>
          <li class="flex h-[18px] items-center gap-1 pl-[22px] whitespace-pre"><svg class="mr-[6px] h-[10px] w-[6px] shrink-0 text-[#aaa]"><use href="#chevR"/></svg><svg class="size-4 shrink-0 text-[#ecc72c]"><use href="#flag"/></svg>Заголовок X-Content-Type-Options отсутствует  (5)</li>
          <li class="flex h-[18px] items-center gap-1 pl-[22px] whitespace-pre"><svg class="mr-[6px] h-[10px] w-[6px] shrink-0 text-[#aaa]"><use href="#chevR"/></svg><svg class="size-4 shrink-0 text-[#ecc72c]"><use href="#flag"/></svg>Раскрытие отметки времени  - Unix (2)</li>
          <li class="flex h-[18px] items-center gap-1 pl-[22px] whitespace-pre"><svg class="mr-[6px] h-[10px] w-[6px] shrink-0 text-[#aaa]"><use href="#chevR"/></svg><svg class="size-4 shrink-0 text-[#4f93d8]"><use href="#flag"/></svg>Authentication Request Identified (2)</li>
          <li class="flex h-[18px] items-center gap-1 pl-[22px] whitespace-pre"><svg class="mr-[6px] h-[10px] w-[6px] shrink-0 text-[#aaa]"><use href="#chevR"/></svg><svg class="size-4 shrink-0 text-[#4f93d8]"><use href="#flag"/></svg>Пользовательский Агент Fuzzer  (12)</li>
        </ul>
        <div class="h-[10px] shrink-0 bg-[#f5f5f5]"><div class="h-full w-[93%] bg-[#dbdbdb]"></div></div>
      </div>
    </div>
    <div class="flex w-[3px] shrink-0 flex-col items-center justify-center gap-[2px]"><i class="size-[3px] rounded-full bg-[#bbb]"></i><i class="size-[3px] rounded-full bg-[#bbb]"></i><i class="size-[3px] rounded-full bg-[#bbb]"></i></div>
    <div class="flex min-w-0 flex-1 overflow-hidden border border-[#c2c2c2]">
      <article class="min-w-0 flex-1 overflow-hidden pt-px pl-px">
        <h3 class="font-bold">Заголовок Content Security Policy (CSP) не задан</h3>
        <dl class="grid auto-rows-[18px] grid-cols-[96px_1fr]">
          <dt>URL-адрес:</dt><dd>http://localhost:5178</dd>
          <dt>Риск:</dt><dd class="flex items-center gap-1"><svg class="size-4 text-[#f99416]"><use href="#flag"/></svg>Medium</dd>
          <dt>Достоверность:</dt><dd>High</dd>
          <dt>Параметр:</dt><dd></dd>
          <dt>Атака:</dt><dd></dd>
          <dt>Доказательства:</dt><dd></dd>
          <dt>CWE ID:</dt><dd>693</dd>
          <dt>WASC ID:</dt><dd>15</dd>
          <dt>Источник:</dt><dd>Пассивный (10038 - Заголовок Content Security Policy (CSP) не задан)</dd>
          <dt>Alert Reference:</dt><dd>10038-1</dd>
          <dt>Input Vector:</dt><dd></dd>
        </dl>
        <fieldset class="mr-[3px] ml-[2px] border border-[#cdcdcd] px-2 pb-[2px]"><legend class="-ml-1 px-[2px]">Описание:</legend>
          <p class="pt-[3px] pr-7 leading-4">Политика безопасности содержимого (CSP) — это дополнительный уровень безопасности, который помогает обнаруживать и смягчать определенные типы атак, включая межсайтовые сценарии (XSS) и атаки с внедрением данных. Эти атаки используются для всего: от кражи данных до порчи сайта или распространения вредоносных программ. CSP предоставляет набор стандартных HTTP-заголовков, которые позволяют владельцам веб-сайтов объявлять утвержденные источники контента, которые браузеры должны разрешить загружать на эту страницу. Охватываемые типы включают JavaScript, CSS, HTML-фреймы, шрифты, изображения и встраиваемые объекты, такие как апплеты Java. ActiveX, аудио и видео файлы.</p></fieldset>
        <fieldset class="mt-1 mr-[3px] ml-[2px] h-[73px] border border-[#cdcdcd] px-2"><legend class="-ml-1 px-[2px]">Дополнительно:</legend></fieldset>
        <fieldset class="mt-1 mr-[3px] ml-[2px] h-[73px] border border-[#cdcdcd] px-2"><legend class="-ml-1 px-[2px]">Решение:</legend></fieldset>
      </article>
      <div class="w-[10px] shrink-0 bg-[#f5f5f5]"><div class="h-[58%] w-full bg-[#dbdbdb]"></div></div>
    </div>
  </div>
</section>

<footer class="flex h-5 shrink-0 items-center border-t-2 border-[#a8a8a8] pr-[7px] pl-[10px]">
  <span class="mr-[9px]">Оповещения</span>
  <span class="flex w-[37px] items-center gap-1"><svg class="size-4 text-[#f65a3c]"><use href="#flag"/></svg>0</span>
  <span class="flex w-[37px] items-center gap-1"><svg class="size-4 text-[#f99416]"><use href="#flag"/></svg>3</span>
  <span class="flex w-[37px] items-center gap-1"><svg class="size-4 text-[#ecc72c]"><use href="#flag"/></svg>2</span>
  <span class="flex w-[35px] items-center gap-1"><svg class="size-4 text-[#4f93d8]"><use href="#flag"/></svg>2</span>
  <i class="h-3 w-px bg-[#c2c2c2]"></i>
  <span class="ml-[3px]">Основной прокси: localhost:8084</span>
  <span class="mr-[5px] ml-auto">Текущие сканирования</span>
  <span class="flex w-[37px] items-center gap-1"><svg class="size-4"><use href="#burst"/></svg>0</span>
  <span class="flex w-[37px] items-center gap-1"><svg class="size-4"><use href="#down"/></svg>0</span>
  <span class="flex w-[37px] items-center gap-1"><svg class="size-4"><use href="#eye"/></svg>0</span>
  <span class="flex w-[37px] items-center gap-1"><svg class="size-4"><use href="#fire"/></svg>2</span>
  <span class="flex w-[37px] items-center gap-1"><svg class="size-4"><use href="#targetRed"/></svg>0</span>
  <span class="flex w-[37px] items-center gap-1"><svg class="size-4"><use href="#hammer"/></svg>0</span>
  <span class="flex w-[37px] items-center gap-1"><svg class="size-4 text-[#c4262c]"><use href="#spider"/></svg>0</span>
  <span class="flex items-center gap-1"><svg class="size-4 text-[#444]"><use href="#spider"/></svg>0</span>
</footer>
</body>
</html>
